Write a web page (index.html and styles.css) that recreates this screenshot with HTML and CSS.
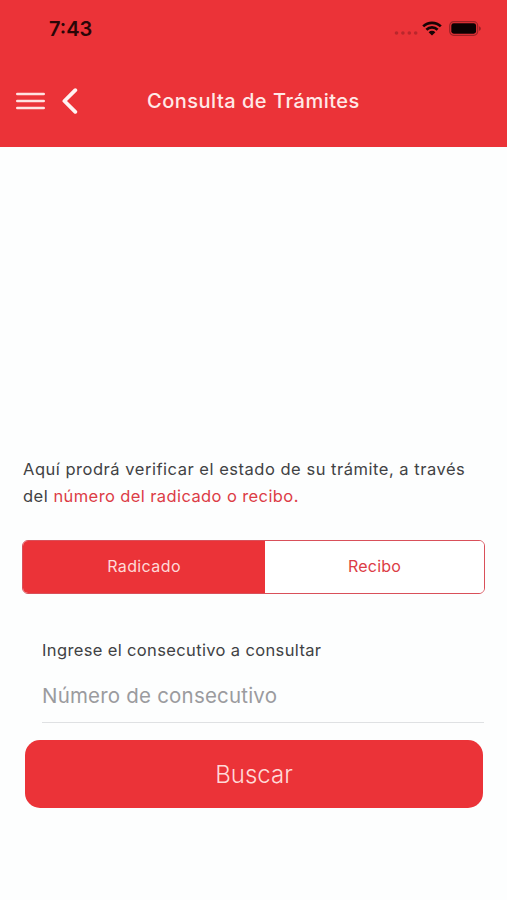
FILE: index.html
```html
<!DOCTYPE html>
<html lang="es">
<head>
    <meta charset="UTF-8">
    <title>Consulta de Trámites</title>
    <link rel="stylesheet" href="styles.css">
</head>
<body>
<header class="header">
    <div class="status">
        <span class="time">7:43</span>
        <div class="status-icons">
            <svg class="signal" width="24" height="6" viewBox="0 0 24 6">
                <circle cx="2.5" cy="3" r="1.8"/>
                <circle cx="8.9" cy="3" r="1.8"/>
                <circle cx="15.3" cy="3" r="1.8"/>
                <circle cx="21.7" cy="3" r="1.8"/>
            </svg>
            <svg class="wifi" width="20" height="15" viewBox="0 0 20 15">
                <path d="M1.2 5.4a12.6 12.6 0 0 1 17.6 0M4.4 8.7a8 8 0 0 1 11.2 0" fill="none" stroke="#180405" stroke-width="2.7"/>
                <path d="M6.6 11.2a4.9 4.9 0 0 1 6.8 0L10 14.6z" fill="#180405"/>
            </svg>
            <svg class="battery" width="33" height="15" viewBox="0 0 33 15">
                <rect x=".7" y=".7" width="28" height="13.6" rx="4" fill="none" stroke="#9c2226" stroke-width="1.2"/>
                <rect x="2.3" y="2.3" width="24.8" height="10.4" rx="2.4" fill="#0c0102"/>
                <path d="M30.2 5.2c2 .8 2 3.8 0 4.6z" fill="#8e1e22"/>
            </svg>
        </div>
    </div>
    <div class="nav">
        <svg class="menu" width="29" height="20" viewBox="0 0 29 20">
            <path d="M1.3 3h26.4M1.3 10h26.4M1.3 17h26.4" stroke="#ffe3e1" stroke-width="2.6" stroke-linecap="round"/>
        </svg>
        <svg class="back" width="16" height="26" viewBox="0 0 16 26">
            <path d="M13.3 2.2L2.4 13l10.9 10.8" fill="none" stroke="#fff3f2" stroke-width="3.8" stroke-linecap="round" stroke-linejoin="round"/>
        </svg>
        <h1 class="title">Consulta de Trámites</h1>
    </div>
</header>
<main class="content">
    <p class="intro">
        Aquí prodrá verificar el estado de su trámite, a través<br>
        del <span class="red">número del radicado o recibo.</span>
    </p>
    <div class="tabs">
        <button class="tab active">Radicado</button>
        <button class="tab">Recibo</button>
    </div>
    <div class="field">
        <label class="label" for="numero">Ingrese el consecutivo a consultar</label>
        <input class="input" type="text" id="numero" placeholder="Número de consecutivo">
    </div>
    <button class="search">Buscar</button>
</main>
</body>
</html>
```

FILE: styles.css
```css
body{
    margin:0;
    height:900px;
    background:#fdfefe;
    font-family:Inter,"Open Sans",sans-serif;
    color:#414244;
}
button,input{
    font-family:inherit;
    margin:0;
}
.header{
    height:147px;
    background:#eb3338;
}
.status{
    display:flex;
    justify-content:space-between;
    height:56px;
    padding:0 25px 0 49px;
}
.time{
    font-size:20px;
    font-weight:600;
    line-height:58px;
    color:#2a0607;
}
.status-icons{
    display:flex;
    padding-top:21px;
}
.signal{
    margin:9px 4px 0 0;
    fill:#b9272c;
}
.wifi{
    margin-right:7px;
}
.nav{
    display:flex;
    align-items:center;
    height:90px;
    padding-left:16px;
}
.back{
    margin-left:17px;
}
.title{
    margin:0 0 0 69px;
    font-size:20px;
    font-weight:500;
    letter-spacing:.5px;
    line-height:30px;
    white-space:nowrap;
    color:#ffe9e7;
}
.content{
    padding:309px 22px 0;
}
.intro{
    margin:0 0 30px 1px;
    font-size:16.5px;
    line-height:27px;
    letter-spacing:.52px;
    white-space:nowrap;
}
.red{
    letter-spacing:.4px;
    color:#dc3c46;
}
.tabs{
    display:flex;
    height:54px;
    box-sizing:border-box;
    border:1.5px solid #d9505a;
    border-radius:6px;
    overflow:hidden;
}
.tab{
    flex:1;
    padding:0 0 2px;
    border:0;
    background:#fff;
    font-size:16px;
    letter-spacing:.2px;
    color:#dc3c46;
}
.tab.active{
    flex:0 0 242px;
    background:#eb3338;
    letter-spacing:.4px;
    color:#ffd9d7;
}
.field{
    display:flex;
    flex-direction:column;
    margin:43px 1px 17px 20px;
}
.label{
    font-size:16.5px;
    line-height:27px;
    letter-spacing:.36px;
}
.input{
    height:59px;
    box-sizing:border-box;
    padding:4px 0 0;
    border:0;
    border-bottom:1px solid #dfe1e3;
    background:none;
    outline:none;
    font-size:20.5px;
    letter-spacing:.2px;
}
.input::placeholder{
    color:#9b9b9e;
    opacity:1;
}
.search{
    display:block;
    width:458px;
    height:68px;
    margin-left:3px;
    padding:0;
    border:0;
    border-radius:15px;
    background:#eb3338;
    font-size:24px;
    font-weight:300;
    color:#ffd9d7;
}
```
